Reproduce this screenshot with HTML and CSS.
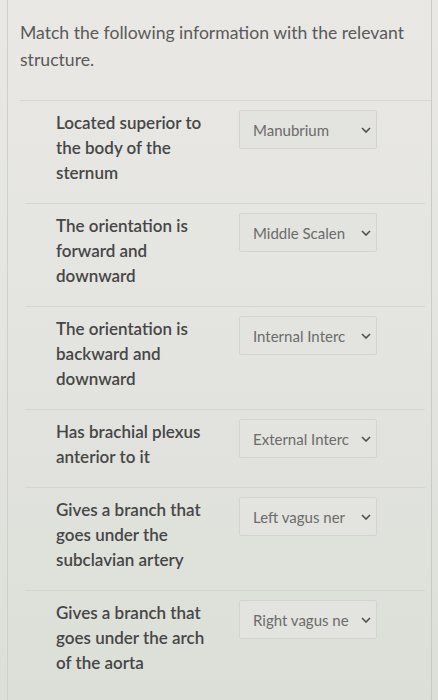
FILE: index.html
```html
<!DOCTYPE html>
<html>
<head>
<meta charset="utf-8">
<link rel="stylesheet" href="styles.css">
</head>
<body>
<div class="page">
  <p class="question">Match the following information with the relevant structure.</p>
  <div class="list">
    <div class="row">
      <div class="prompt">Located superior to<br>the body of the<br>sternum</div>
      <div class="select"><span class="value">Manubrium</span><svg class="chev" viewBox="0 0 10 6"><path d="M1 1 L5 5 L9 1"/></svg></div>
    </div>
    <div class="row">
      <div class="prompt">The orientation is<br>forward and<br>downward</div>
      <div class="select"><span class="value">Middle Scalen</span><svg class="chev" viewBox="0 0 10 6"><path d="M1 1 L5 5 L9 1"/></svg></div>
    </div>
    <div class="row">
      <div class="prompt">The orientation is<br>backward and<br>downward</div>
      <div class="select"><span class="value">Internal Interc</span><svg class="chev" viewBox="0 0 10 6"><path d="M1 1 L5 5 L9 1"/></svg></div>
    </div>
    <div class="row">
      <div class="prompt">Has brachial plexus<br>anterior to it</div>
      <div class="select"><span class="value">External Interc</span><svg class="chev" viewBox="0 0 10 6"><path d="M1 1 L5 5 L9 1"/></svg></div>
    </div>
    <div class="row">
      <div class="prompt">Gives a branch that<br>goes under the<br>subclavian artery</div>
      <div class="select"><span class="value">Left vagus ner</span><svg class="chev" viewBox="0 0 10 6"><path d="M1 1 L5 5 L9 1"/></svg></div>
    </div>
    <div class="row last">
      <div class="prompt">Gives a branch that<br>goes under the arch<br>of the aorta</div>
      <div class="select"><span class="value">Right vagus ne</span><svg class="chev" viewBox="0 0 10 6"><path d="M1 1 L5 5 L9 1"/></svg></div>
    </div>
  </div>
</div>
</body>
</html>
```

FILE: styles.css
```css
html, body {
  margin: 0;
  padding: 0;
}
body {
  width: 438px;
  height: 700px;
  overflow: hidden;
  background: linear-gradient(180deg, #e9e8e5 0%, #e4e4e0 45%, #dcdfd8 100%);
  font-family: Lato, "Open Sans", sans-serif;
}
.page {
  margin: 0 6px 0 7px;
  height: 700px;
  border-left: 1px solid #cfd0cb;
  border-right: 1px solid #c9ccc5;
  padding: 0 0 0 12px;
}
.question {
  margin: 0;
  padding: 19px 0 0 0;
  height: 101px;
  box-sizing: border-box;
  font-size: 17.6px;
  line-height: 27px;
  color: #5a5a5a;
  border-bottom: 1px solid #d6d6d2;
}
.list {
  padding: 0 6px 0 5px;
}
.row {
  display: flex;
  align-items: flex-start;
  padding: 9px 0 18px 0;
  border-bottom: 1px solid #d4d5d0;
}
.row.last {
  border-bottom: none;
}
.prompt {
  width: 183px;
  padding-left: 31px;
  font-size: 17px;
  line-height: 25px;
  font-weight: 600;
  color: #464646;
  white-space: nowrap;
}
.select {
  display: flex;
  align-items: center;
  width: 138px;
  height: 39px;
  box-sizing: border-box;
  border: 1px solid #d3d4cf;
  border-radius: 2px;
  background: #e3e3df;
  padding: 0 5px 0 13px;
}
.value {
  white-space: nowrap;
  font-size: 15px;
  color: #6b6b6b;
}
.chev {
  width: 10px;
  height: 6px;
  margin-left: auto;
  fill: none;
  stroke: #4f4f4f;
  stroke-width: 1.6;
}
```
